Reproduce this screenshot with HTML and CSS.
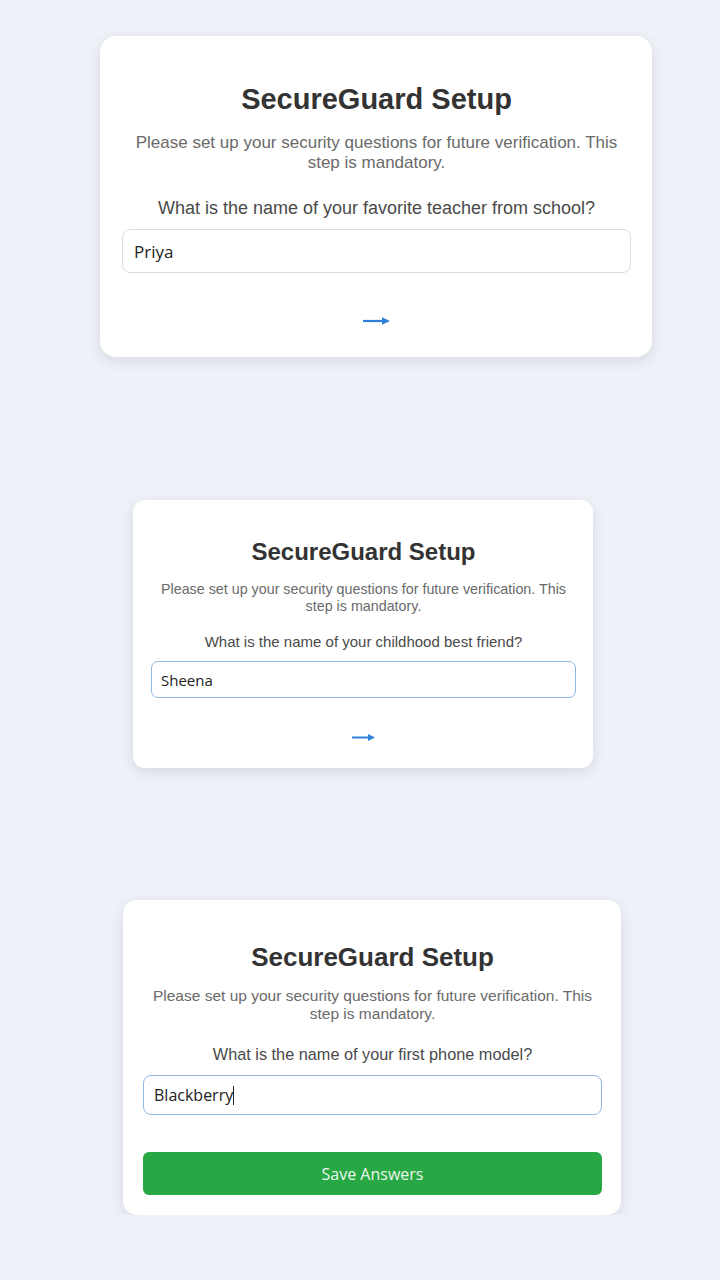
FILE: index.html
```html
<!DOCTYPE html>
<html lang="en">
<head>
    <meta charset="UTF-8">
    <meta name="viewport" content="width=device-width, initial-scale=1.0">
    <title>SecureGuard Setup</title>
    <link rel="stylesheet" href="styles.css">
</head>
<body>
    <div class="page">
        <div class="card card-one">
            <h1>SecureGuard Setup</h1>
            <p class="intro">Please set up your security questions for future verification. This step is mandatory.</p>
            <label for="answer1">What is the name of your favorite teacher from school?</label>
            <input type="text" id="answer1" value="Priya">
            <button type="button" class="next">
                <svg width="27" height="10" viewBox="0 0 27 10"><path d="M0 5H21" stroke="#2f80d8" stroke-width="2.2"/><path d="M19 1.2L27 5L19 8.8Z" fill="#2f80d8"/></svg>
            </button>
        </div>

        <div class="card card-two">
            <h1>SecureGuard Setup</h1>
            <p class="intro">Please set up your security questions for future verification. This step is mandatory.</p>
            <label for="answer2">What is the name of your childhood best friend?</label>
            <input type="text" id="answer2" class="active" value="Sheena">
            <button type="button" class="next">
                <svg width="23" height="9" viewBox="0 0 23 9"><path d="M0 4.5H18" stroke="#2f80d8" stroke-width="2"/><path d="M16 1L23 4.5L16 8Z" fill="#2f80d8"/></svg>
            </button>
        </div>

        <div class="card card-three">
            <h1>SecureGuard Setup</h1>
            <p class="intro">Please set up your security questions for future verification. This step is mandatory.</p>
            <label for="answer3">What is the name of your first phone model?</label>
            <div class="field active"><span>Blackberry</span><span class="caret"></span></div>
            <button type="button" class="save">Save Answers</button>
        </div>
    </div>
</body>
</html>
```

FILE: styles.css
```css
* {
    box-sizing: border-box;
}
body {
    margin: 0;
    background-color: #eef2f8;
    font-family: "Liberation Sans", Arial, sans-serif;
}
.page {
    display: flex;
    flex-direction: column;
    align-items: flex-start;
    padding-top: 36px;
}
.card {
    display: flex;
    flex-direction: column;
    background-color: #fff;
    text-align: center;
    box-shadow: 0 4px 14px rgba(0, 0, 0, 0.1);
}
h1 {
    margin: 0;
    color: #333;
    font-weight: bold;
}
.intro {
    margin: 0;
    color: #6a6a6a;
}
label {
    display: block;
    color: #4a4a4a;
}
input, .field {
    width: 100%;
    border: 1px solid #dcdcdc;
    background: #fff;
    color: #222;
    font-family: "Open Sans", "Noto Sans", sans-serif;
    text-align: left;
    outline: none;
}
.active {
    border-color: #8fb9e2;
}
.field {
    display: flex;
    align-items: center;
}
.caret {
    display: inline-block;
    width: 1px;
    height: 19px;
    background: #222;
}
.next {
    display: flex;
    justify-content: center;
    align-items: center;
    border: none;
    background: transparent;
    cursor: pointer;
}
.save {
    width: 100%;
    border: none;
    background-color: #28a745;
    color: #eaf7ec;
    font-family: "Open Sans", "Noto Sans", sans-serif;
    cursor: pointer;
}

/* first card */
.card-one {
    width: 552px;
    margin-left: 100px;
    padding: 46px 21px 21px 22px;
    border-radius: 16px;
}
.card-one h1 {
    font-size: 29px;
    line-height: 34px;
}
.card-one .intro {
    margin-top: 17px;
    font-size: 17px;
    line-height: 20px;
}
.card-one label {
    margin-top: 24px;
    font-size: 18px;
    line-height: 22px;
}
.card-one input {
    margin-top: 10px;
    height: 44px;
    padding: 0 11px;
    border-radius: 8px;
    font-size: 17px;
}
.card-one .next {
    margin-top: 33px;
    height: 30px;
}

/* second card */
.card-two {
    width: 460px;
    margin-top: 143px;
    margin-left: 133px;
    padding: 38px 17px 18px 18px;
    border-radius: 12px;
}
.card-two h1 {
    font-size: 24px;
    line-height: 28px;
}
.card-two .intro {
    margin-top: 15px;
    font-size: 14.3px;
    line-height: 17px;
}
.card-two label {
    margin-top: 18px;
    font-size: 15px;
    line-height: 18px;
}
.card-two input {
    margin-top: 10px;
    height: 37px;
    padding: 0 9px;
    border-radius: 7px;
    font-size: 15px;
}
.card-two .next {
    margin-top: 26px;
    height: 26px;
}

/* third card */
.card-three {
    width: 498px;
    margin-top: 132px;
    margin-left: 123px;
    padding: 42px 19px 20px 20px;
    border-radius: 14px;
}
.card-three h1 {
    font-size: 26px;
    line-height: 30px;
}
.card-three .intro {
    margin-top: 15px;
    font-size: 15.5px;
    line-height: 18px;
}
.card-three label {
    margin-top: 22px;
    font-size: 16.3px;
    line-height: 19px;
}
.card-three .field {
    margin-top: 11px;
    height: 40px;
    padding: 0 10px;
    border-radius: 8px;
    font-size: 16px;
}
.card-three .save {
    margin-top: 37px;
    height: 43px;
    border-radius: 6px;
    font-size: 16px;
}
```
